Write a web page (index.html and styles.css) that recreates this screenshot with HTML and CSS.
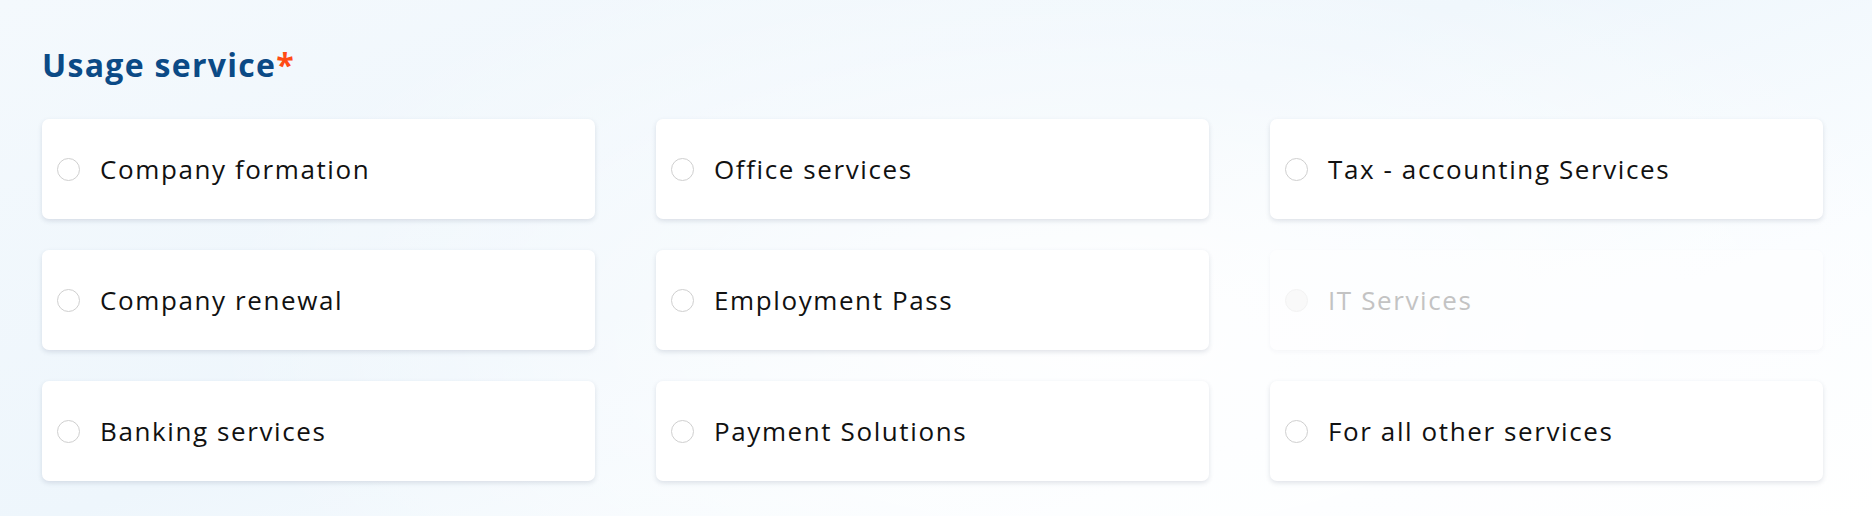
FILE: index.html
```html
<!DOCTYPE html>
<html lang="en">
<head>
<meta charset="utf-8">
<title>Usage service</title>
<link rel="stylesheet" href="styles.css">
</head>
<body>
<section class="field">
  <h2 class="field-title">Usage service<span class="req">*</span></h2>
  <div class="options">
    <label class="option"><span class="radio"></span><span class="label">Company formation</span></label>
    <label class="option"><span class="radio"></span><span class="label">Office services</span></label>
    <label class="option"><span class="radio"></span><span class="label">Tax - accounting Services</span></label>
    <label class="option"><span class="radio"></span><span class="label">Company renewal</span></label>
    <label class="option"><span class="radio"></span><span class="label">Employment Pass</span></label>
    <label class="option disabled"><span class="radio"></span><span class="label">IT Services</span></label>
    <label class="option"><span class="radio"></span><span class="label">Banking services</span></label>
    <label class="option"><span class="radio"></span><span class="label">Payment Solutions</span></label>
    <label class="option"><span class="radio"></span><span class="label">For all other services</span></label>
  </div>
</section>
</body>
</html>
```

FILE: styles.css
```css
html, body {
  margin: 0;
  padding: 0;
}
body {
  width: 1872px;
  height: 516px;
  overflow: hidden;
  font-family: "Open Sans", "Noto Sans", sans-serif;
  background:
    radial-gradient(ellipse 900px 420px at 1100px 330px, rgba(255,255,255,0.95), rgba(255,255,255,0) 100%),
    linear-gradient(160deg, #f4f9fd 0%, #eef6fc 45%, #fafdff 75%, #ffffff 100%);
  background-color: #f3f9fd;
}
.field {
  padding: 44px 0 0 42px;
}
.field-title {
  margin: 0;
  font-size: 32px;
  line-height: 42px;
  font-weight: 700;
  color: #0b4a86;
  letter-spacing: 1.3px;
}
.req {
  color: #ff4b14;
  margin-left: 0;
}
.options {
  display: grid;
  grid-template-columns: repeat(3, 553px);
  grid-auto-rows: 100px;
  column-gap: 61px;
  row-gap: 31px;
  margin-top: 33px;
}
.option {
  display: flex;
  align-items: center;
  background: #ffffff;
  border-radius: 7px;
  box-shadow: 0 2px 5px rgba(40, 60, 90, 0.14);
  padding-left: 15px;
}
.radio {
  box-sizing: border-box;
  width: 23px;
  height: 23px;
  border: 1px solid #cfcfcf;
  border-radius: 50%;
  background: #fff;
  flex: none;
}
.label {
  margin-left: 20px;
  font-size: 26px;
  color: #111111;
  letter-spacing: 1.6px;
}
.option.disabled {
  background: rgba(255,255,255,0.45);
  box-shadow: 0 2px 5px rgba(40, 60, 90, 0.04);
}
.option.disabled .radio {
  border-color: #f3f3f3;
  background: #f9f9f9;
}
.option.disabled .label {
  color: #c3c3c3;
}
```
